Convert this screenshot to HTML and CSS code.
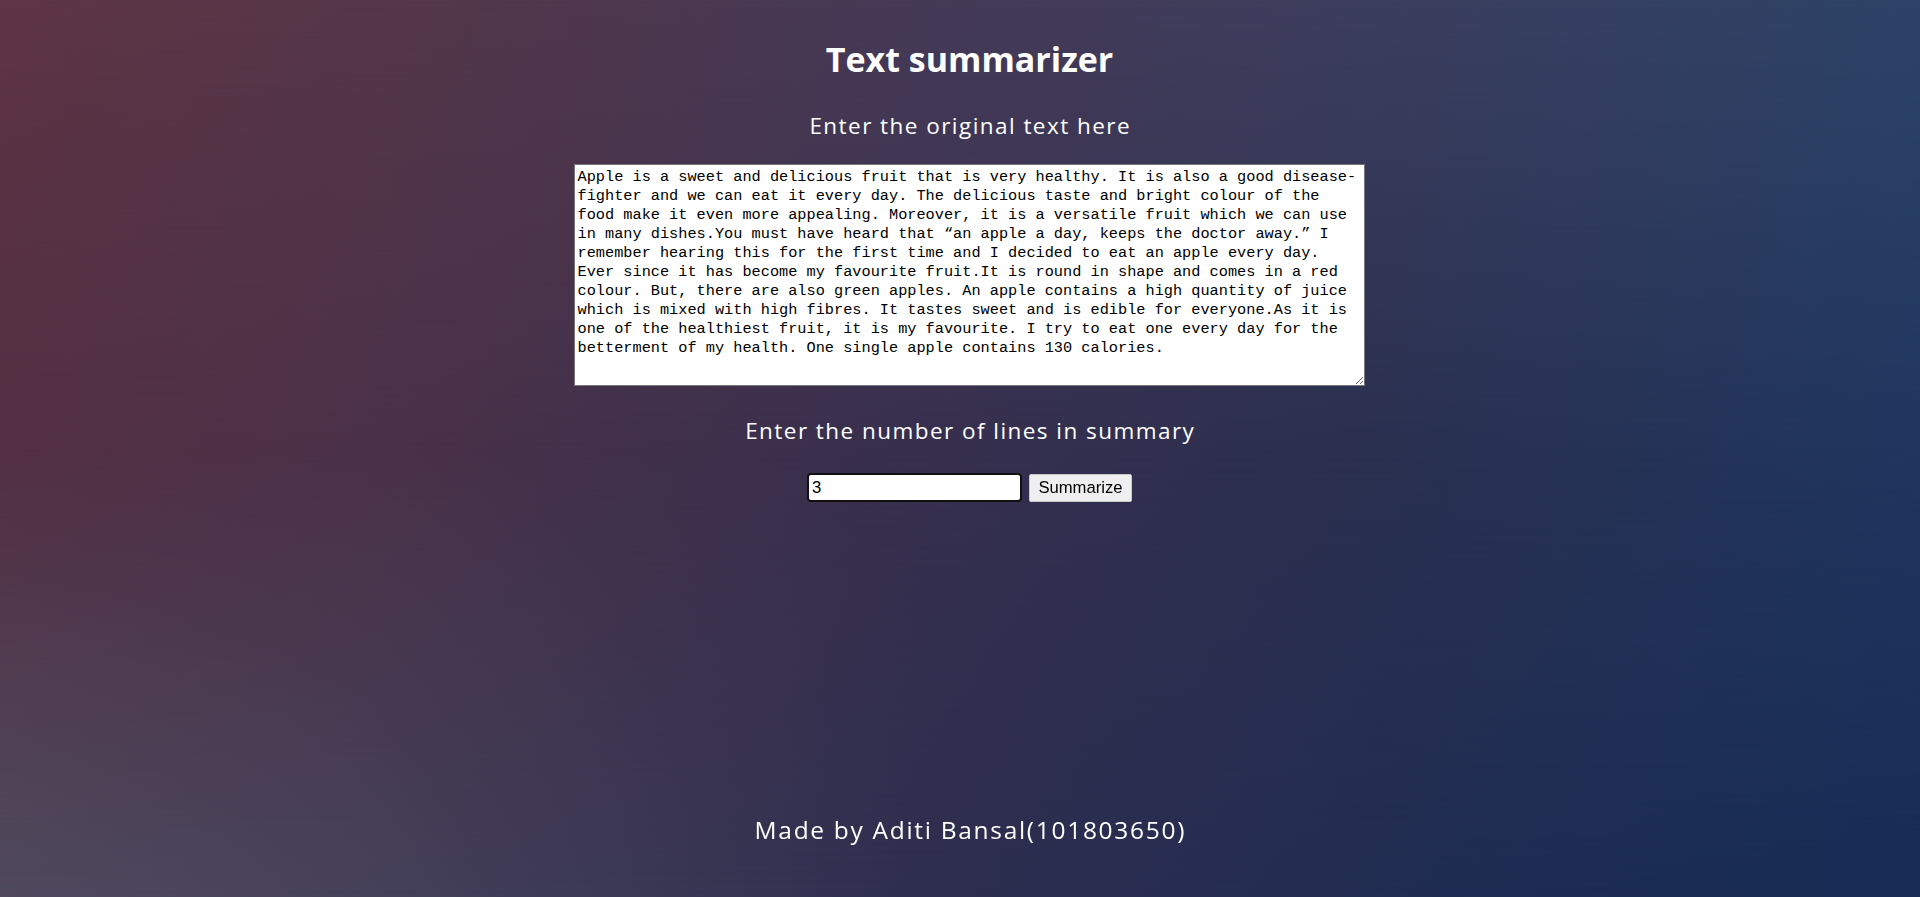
FILE: index.html
```html
<!DOCTYPE html>
<html lang="en">
<head>
<meta charset="utf-8">
<title>Text summarizer</title>
<link rel="stylesheet" href="styles.css">
</head>
<body>
<div class="page">
  <main class="main">
    <h1 class="title">Text summarizer</h1>
    <form class="form" onsubmit="return false;">
      <label class="label label-first" for="orig">Enter the original text here</label>
      <textarea id="orig" class="orig" spellcheck="false">Apple is a sweet and delicious fruit that is very healthy. It is also a good disease-fighter and we can eat it every day. The delicious taste and bright colour of the food make it even more appealing. Moreover, it is a versatile fruit which we can use in many dishes.You must have heard that “an apple a day, keeps the doctor away.” I remember hearing this for the first time and I decided to eat an apple every day. Ever since it has become my favourite fruit.It is round in shape and comes in a red colour. But, there are also green apples. An apple contains a high quantity of juice which is mixed with high fibres. It tastes sweet and is edible for everyone.As it is one of the healthiest fruit, it is my favourite. I try to eat one every day for the betterment of my health. One single apple contains 130 calories.</textarea>
      <label class="label label-second" for="lines">Enter the number of lines in summary</label>
      <div class="row">
        <input id="lines" class="lines" type="text" value="3" autofocus>
        <button class="btn" type="submit">Summarize</button>
      </div>
    </form>
  </main>
  <footer class="footer">Made by Aditi Bansal(101803650)</footer>
</div>
</body>
</html>
```
FILE: styles.css
```css
html, body {
  margin: 0;
  padding: 0;
}
body {
  min-height: 100vh;
  font-family: "Open Sans", "Noto Sans", sans-serif;
  color: #ffffff;
  background: #302f4f;
}
.page {
  position: relative;
  isolation: isolate;
  box-sizing: border-box;
  min-height: 100vh;
  display: flex;
  flex-direction: column;
  align-items: center;
  padding-left: 19px;
  background: linear-gradient(to right, #5e3545 0%, #553749 20%, #473a56 45%, #3d3e5e 70%, #2d4468 100%);
}
.page::before,
.page::after {
  content: "";
  position: absolute;
  inset: 0;
  z-index: -1;
  pointer-events: none;
}
.page::before {
  background: linear-gradient(to right, #532f43 0%, #4a3148 20%, #372f4e 48%, #2a3050 72%, #20365f 100%);
  -webkit-mask-image: linear-gradient(to bottom, transparent 0%, #000 50%, #000 100%);
  mask-image: linear-gradient(to bottom, transparent 0%, #000 50%, #000 100%);
}
.page::after {
  background: linear-gradient(to right, #4f4a5e 0%, #46425a 18%, #2e2e4f 48%, #1f2c52 75%, #162c55 100%);
  -webkit-mask-image: linear-gradient(to bottom, transparent 50%, #000 100%);
  mask-image: linear-gradient(to bottom, transparent 50%, #000 100%);
}
.main {
  display: flex;
  flex-direction: column;
  align-items: center;
}
.title {
  margin: 36px 0 0;
  font-size: 34px;
  line-height: 46px;
  font-weight: 700;
  color: #ffffff;
}
.form {
  display: flex;
  flex-direction: column;
  align-items: center;
}
.label {
  display: block;
  font-size: 22.5px;
  line-height: 30px;
  letter-spacing: 1.45px;
  font-weight: 400;
  padding-left: 1.45px;
}
.label-first {
  margin-top: 28.5px;
}
.label-second {
  margin-top: 30px;
}
.orig {
  box-sizing: border-box;
  display: block;
  margin-top: 23.5px;
  width: 791px;
  height: 222px;
  padding: 2.5px;
  border: 1px solid #767676;
  background: #ffffff;
  color: #000000;
  font-family: "Liberation Mono", "DejaVu Sans Mono", monospace;
  font-size: 15.28px;
  line-height: 19px;
  overflow: hidden;
}
.row {
  display: flex;
  align-items: center;
  gap: 7px;
  margin-top: 27px;
}
.lines {
  box-sizing: border-box;
  width: 215px;
  height: 29px;
  padding: 0 3px;
  border: 2px solid #101010;
  border-radius: 4px;
  background: #ffffff;
  color: #000000;
  caret-color: #000000;
  font-family: "Liberation Sans", Arial, sans-serif;
  font-size: 16.67px;
  outline: none;
  box-shadow: inset 0 0 0 1px #ffffff;
}
.lines:focus {
  outline: none;
}
.btn {
  box-sizing: border-box;
  width: 103px;
  height: 28px;
  padding: 0;
  border: 1px solid #c9c9c9;
  border-radius: 2px;
  background: #efefef;
  color: #000000;
  font-family: "Liberation Sans", Arial, sans-serif;
  font-size: 16.67px;
}
.footer {
  margin-top: auto;
  margin-bottom: 50px;
  font-size: 24.5px;
  line-height: 34px;
  letter-spacing: 1.7px;
  padding-left: 1.7px;
}
```
